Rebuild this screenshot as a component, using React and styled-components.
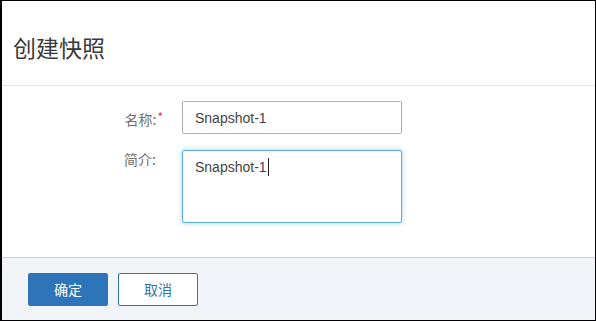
import React from "react";
import styled, { createGlobalStyle } from "styled-components";

const GlobalStyle = createGlobalStyle`
  html, body {
    margin: 0;
    padding: 0;
    background: #ffffff;
  }
  body {
    font-family: "Liberation Sans", "Noto Sans CJK SC", sans-serif;
  }
`;

const Dialog = styled.div`
  box-sizing: border-box;
  width: 596px;
  height: 321px;
  border: 1px solid #000;
  border-left-width: 2px;
  display: flex;
  flex-direction: column;
  background: #fff;
`;

const Header = styled.div`
  height: 84px;
  display: flex;
  align-items: center;
  padding: 0 11px;
  border-bottom: 1px solid #e6e6e6;
`;

const Title = styled.h2`
  margin: 0;
  padding-top: 8px;
  font-family: "Noto Sans CJK SC", sans-serif;
  font-size: 23px;
  font-weight: 400;
  color: #3a3a3a;
`;

const Body = styled.div`
  flex: 1;
  display: flex;
  flex-direction: column;
  gap: 16px;
  padding-top: 15px;
`;

const Row = styled.div`
  display: grid;
  grid-template-columns: 161px 220px;
  column-gap: 19px;
  align-items: ${(p) => (p.top ? "start" : "center")};
`;

const Label = styled.label`
  text-align: right;
  font-family: "Noto Sans CJK SC", sans-serif;
  font-size: 14px;
  line-height: 16px;
  color: #707070;
  padding-top: ${(p) => (p.top ? "1px" : "0")};
  padding-right: ${(p) => (p.required ? "0" : "7px")};
`;

const Star = styled.span`
  color: #e53935;
  font-size: 12px;
  vertical-align: 3px;
  margin-left: 1px;
`;

const TextInput = styled.input`
  box-sizing: border-box;
  width: 220px;
  height: 33px;
  border: 1px solid #a9b0b8;
  border-radius: 2px;
  padding: 0 12px;
  font-family: "Liberation Sans", "Noto Sans CJK SC", sans-serif;
  font-size: 14px;
  color: #444;
  outline: none;
`;

const TextArea = styled.div`
  box-sizing: border-box;
  width: 220px;
  height: 73px;
  border: 1px solid #5aaee6;
  border-radius: 2px;
  box-shadow: 0 0 5px rgba(90, 174, 230, 0.55);
  padding: 7px 12px;
  font-size: 14px;
  line-height: 18px;
  color: #444;
`;

const Caret = styled.span`
  display: inline-block;
  width: 1px;
  height: 18px;
  background: #222;
  vertical-align: -4px;
  margin-left: 1px;
`;

const Footer = styled.div`
  height: 62px;
  border-top: 1px solid #d2d2d2;
  background: #f1f4f9;
  display: flex;
  align-items: center;
  gap: 10px;
  padding: 0 26px;
`;

const Button = styled.button`
  box-sizing: border-box;
  width: 80px;
  height: 33px;
  border-radius: 2px;
  border: 1px solid #2e74b8;
  background: ${(p) => (p.primary ? "#2e74b8" : "#fff")};
  color: ${(p) => (p.primary ? "#fff" : "#2e74b8")};
  font-family: "Noto Sans CJK SC", sans-serif;
  font-size: 14px;
  cursor: pointer;
`;

export default function App() {
  return (
    <>
      <GlobalStyle />
      <Dialog>
        <Header>
          <Title>创建快照</Title>
        </Header>
        <Body>
          <Row>
            <Label required>
              名称:<Star>*</Star>
            </Label>
            <TextInput defaultValue="Snapshot-1" />
          </Row>
          <Row top>
            <Label top>简介:</Label>
            <TextArea>
              Snapshot-1
              <Caret />
            </TextArea>
          </Row>
        </Body>
        <Footer>
          <Button primary>确定</Button>
          <Button>取消</Button>
        </Footer>
      </Dialog>
    </>
  );
}
